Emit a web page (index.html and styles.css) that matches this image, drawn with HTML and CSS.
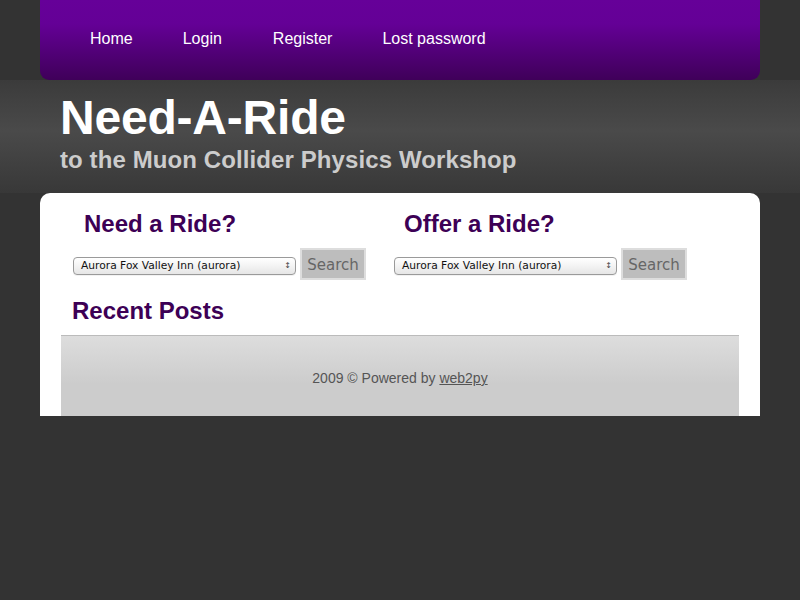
FILE: index.html
```html
<!DOCTYPE html>
<html>
<head>
<meta charset="utf-8">
<title>Need-A-Ride</title>
<link rel="stylesheet" href="styles.css">
</head>
<body>
<div class="navwrap">
  <nav class="nav">
    <a href="#">Home</a>
    <a href="#">Login</a>
    <a href="#">Register</a>
    <a href="#">Lost password</a>
  </nav>
</div>
<header class="header">
  <div class="header-inner">
    <h1 class="title">Need-A-Ride</h1>
    <h2 class="subtitle">to the Muon Collider Physics Workshop</h2>
  </div>
</header>
<main class="content">
  <div class="columns">
    <section class="col">
      <h3 class="col-title">Need a Ride?</h3>
      <form class="search-form">
        <div class="select"><span>Aurora Fox Valley Inn (aurora)</span><span class="arrows">&#x2195;</span></div>
        <button type="button" class="btn">Search</button>
      </form>
    </section>
    <section class="col">
      <h3 class="col-title col-title-offer">Offer a Ride?</h3>
      <form class="search-form">
        <div class="select"><span>Aurora Fox Valley Inn (aurora)</span><span class="arrows">&#x2195;</span></div>
        <button type="button" class="btn">Search</button>
      </form>
    </section>
  </div>
  <h3 class="recent">Recent Posts</h3>
  <footer class="footer">2009 &copy; Powered by <a href="#">web2py</a></footer>
</main>
</body>
</html>
```
FILE: styles.css
```css
html, body {
  margin: 0;
  padding: 0;
  background: #333333;
  font-family: "Liberation Sans", Arial, sans-serif;
}
.navwrap {
  width: 720px;
  margin: 0 auto;
}
.nav {
  height: 80px;
  background: linear-gradient(to bottom, #660099 0%, #640096 30%, #3f0059 100%);
  border-radius: 0 0 9px 9px;
  display: flex;
  align-items: flex-start;
  padding-left: 50px;
  box-sizing: border-box;
}
.nav a {
  color: #ffffff;
  text-decoration: none;
  font-size: 16px;
  line-height: 18px;
  margin-top: 30px;
}
.nav a:nth-child(1) { margin-right: 50px; }
.nav a:nth-child(2) { margin-right: 51px; }
.nav a:nth-child(3) { margin-right: 50px; }
.header {
  height: 113px;
  background: linear-gradient(to bottom, #3b3b3b 0%, #4a4a4a 45%, #404040 75%, #383838 100%);
}
.header-inner {
  width: 680px;
  margin: 0 auto;
  padding-top: 12px;
}
.title {
  margin: 0;
  color: #ffffff;
  font-size: 48px;
  line-height: 52px;
  font-weight: bold;
  letter-spacing: -0.2px;
}
.subtitle {
  margin: 2px 0 0 0;
  color: #cccccc;
  font-size: 24px;
  line-height: 28px;
  font-weight: bold;
  letter-spacing: 0.1px;
}
.content {
  width: 720px;
  margin: 0 auto;
  background: #ffffff;
  border-radius: 10px 10px 0 0;
  padding: 0 21px;
  box-sizing: border-box;
}
.columns {
  display: flex;
  padding-top: 16px;
}
.col {
  width: 321px;
  padding-left: 12px;
  box-sizing: border-box;
}
.col-title {
  margin: 0 0 0 11px;
  color: #3d0055;
  font-size: 24px;
  line-height: 30px;
  font-weight: bold;
}
.col-title-offer {
  margin-left: 10px;
}
.search-form {
  display: flex;
  align-items: center;
  margin-top: 9px;
  gap: 4px;
}
.select {
  width: 223px;
  height: 18px;
  margin-top: 4px;
  box-sizing: border-box;
  border: 1px solid #9a9a9a;
  border-radius: 4px;
  background: linear-gradient(to bottom, #ffffff 0%, #f3f3f3 50%, #e6e6e6 100%);
  font-family: "DejaVu Sans", "Liberation Sans", sans-serif;
  font-size: 10.7px;
  line-height: 16px;
  color: #111;
  display: flex;
  justify-content: space-between;
  padding: 0 4px 0 7px;
  box-shadow: 0 1px 0 rgba(0,0,0,0.05);
}
.arrows {
  font-size: 8px;
  color: #444;
}
.btn {
  width: 66px;
  height: 32px;
  background: #bdbdbd;
  border: 2px solid #dddddd;
  color: #666666;
  font-family: "DejaVu Sans", "Liberation Sans", sans-serif;
  font-size: 15px;
  line-height: 28px;
  padding: 1px 0 0 0;
  margin: 0;
}
.recent {
  margin: 16px 0 0 11px;
  color: #3d0055;
  font-size: 24px;
  line-height: 30px;
  font-weight: bold;
}
.footer {
  margin-top: 9px;
  height: 81px;
  border-top: 1px solid #bbbbbb;
  background: linear-gradient(to bottom, #dddddd 0%, #cccccc 60%, #cccccc 100%);
  color: #555555;
  font-size: 14px;
  text-align: center;
  line-height: 84px;
  box-sizing: border-box;
}
.footer a {
  color: #555555;
  text-decoration: underline;
}
```
